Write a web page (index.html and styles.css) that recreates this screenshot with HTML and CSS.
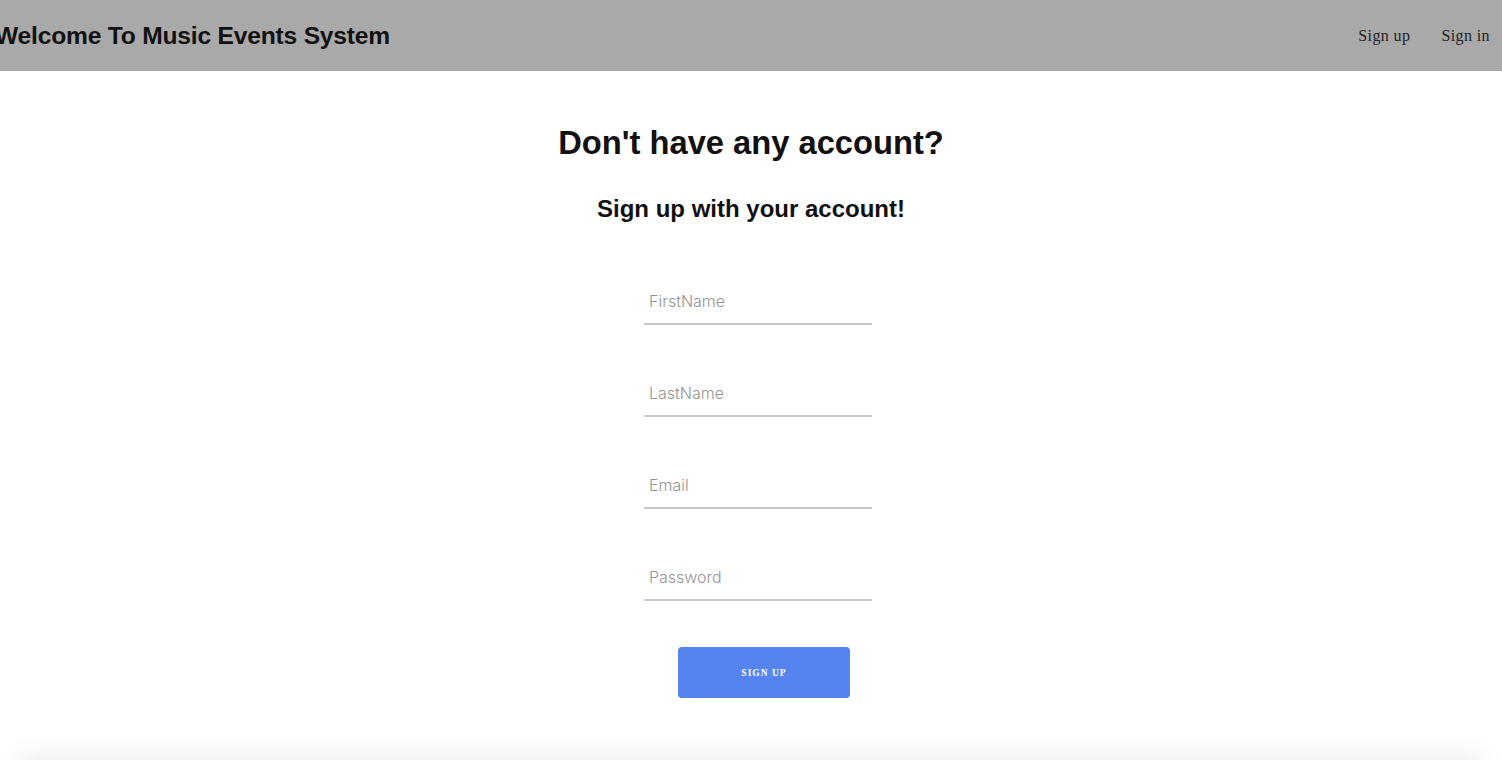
FILE: index.html
```html
<!DOCTYPE html>
<html>
<head>
<meta charset="utf-8">
<link rel="stylesheet" href="styles.css">
</head>
<body>
<header class="topbar">
  <h1 class="brand">Welcome To Music Events System</h1>
  <nav class="nav">
    <a class="nav-link" href="#">Sign up</a>
    <a class="nav-link" href="#">Sign in</a>
  </nav>
</header>
<main class="content">
  <h2 class="title">Don't have any account?</h2>
  <h3 class="subtitle">Sign up with your account!</h3>
  <form class="form">
    <input class="field" type="text" placeholder="FirstName">
    <input class="field" type="text" placeholder="LastName">
    <input class="field" type="email" placeholder="Email">
    <input class="field" type="password" placeholder="Password">
    <button class="btn" type="button">SIGN UP</button>
  </form>
</main>
<div class="footer-shadow"></div>
</body>
</html>
```
FILE: styles.css
```css
html, body {
  margin: 0;
  padding: 0;
  background: #fff;
  overflow: hidden;
  height: 760px;
}
body {
  font-family: "Liberation Sans", Arial, sans-serif;
  position: relative;
}
.topbar {
  height: 71px;
  background: #a9a9a9;
  display: flex;
  align-items: center;
  justify-content: space-between;
  padding: 0 12px 0 0;
}
.brand {
  margin: 0 0 0 -5px;
  font-size: 24.6px;
  font-weight: bold;
  color: #111;
  letter-spacing: -0.2px;
}
.nav {
  display: flex;
  gap: 31px;
}
.nav-link {
  font-family: "Liberation Serif", "Times New Roman", serif;
  font-size: 16px;
  letter-spacing: 0.4px;
  color: #222;
  text-decoration: none;
}
.content {
  display: flex;
  flex-direction: column;
  align-items: center;
}
.title {
  margin: 52px 0 0;
  font-size: 32.7px;
  font-weight: bold;
  color: #111;
  line-height: 40px;
}
.subtitle {
  margin: 31px 0 0;
  font-size: 24px;
  font-weight: bold;
  color: #111;
  line-height: 30px;
}
.form {
  display: flex;
  flex-direction: column;
  align-items: center;
  margin-top: 65px;
  margin-left: 14px;
}
.field {
  width: 228px;
  height: 36px;
  box-sizing: border-box;
  border: none;
  border-bottom: 2px solid #c8c8c8;
  padding: 0 5px 10px;
  font-family: "Inter", "Liberation Sans", sans-serif;
  font-size: 16px;
  font-weight: 300;
  color: #333;
  outline: none;
  background: transparent;
  margin-bottom: 56px;
}
.field:last-of-type {
  margin-bottom: 46px;
}
.field::placeholder {
  color: #959595;
}
.btn {
  width: 172px;
  height: 51px;
  background: #5584ee;
  border: none;
  border-radius: 4px;
  color: #fff;
  font-family: "Liberation Serif", serif;
  font-weight: bold;
  font-size: 9.5px;
  letter-spacing: 1px;
  margin-left: 12px;
}
.footer-shadow {
  position: absolute;
  left: 20px;
  right: 20px;
  top: 772px;
  height: 40px;
  box-shadow: 0 -10px 30px rgba(0,0,0,0.12);
}
```
